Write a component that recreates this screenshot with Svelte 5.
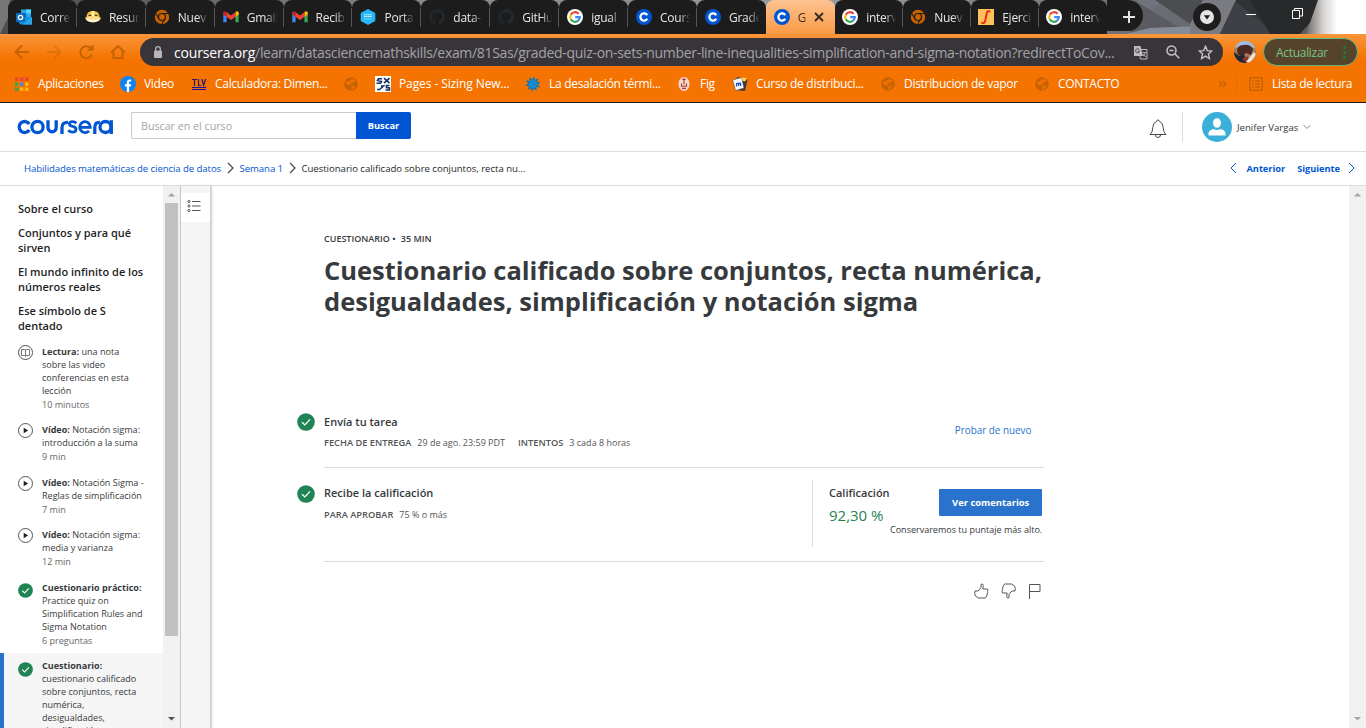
<script>
  const tabs = [
    { icon: 'outlook', label: 'Corre' },
    { icon: 'helmet', label: 'Resur' },
    { icon: 'chrome', label: 'Nuev' },
    { icon: 'gmail', label: 'Gmail' },
    { icon: 'gmail', label: 'Recib' },
    { icon: 'hex', label: 'Porta' },
    { icon: 'github', label: 'data-' },
    { icon: 'github', label: 'GitHu' },
    { icon: 'google', label: 'igual' },
    { icon: 'coursera', label: 'Cours' },
    { icon: 'coursera', label: 'Grade' },
    { icon: 'coursera', label: 'G', active: true },
    { icon: 'google', label: 'interv' },
    { icon: 'chrome', label: 'Nuev' },
    { icon: 'integral', label: 'Ejerci' },
    { icon: 'google', label: 'interv' }
  ];

  const bookmarks = [
    { icon: 'apps', label: 'Aplicaciones', width: 106 },
    { icon: 'facebook', label: 'Video', width: 71 },
    { icon: 'tlv', label: 'Calculadora: Dimen...', width: 152 },
    { icon: 'globe', label: '', width: 32 },
    { icon: 'sx', label: 'Pages - Sizing New...', width: 150, loose: true },
    { icon: 'sun', label: 'La desalación térmi...', width: 151 },
    { icon: 'fig', label: 'Fig', width: 56 },
    { icon: 'moodle', label: 'Curso de distribuci...', width: 148 },
    { icon: 'globe', label: 'Distribucion de vapor', width: 154 },
    { icon: 'globe', label: 'CONTACTO', width: 90 }
  ];

  const headings = [
    ['Sobre el curso'],
    ['Conjuntos y para qué', 'sirven'],
    ['El mundo infinito de los', 'números reales'],
    ['Ese símbolo de S', 'dentado']
  ];

  const lessons = [
    { icon: 'book', kind: 'Lectura:', lines: ['una nota', 'sobre las video', 'conferencias en esta', 'lección'], meta: '10 minutos' },
    { icon: 'play', kind: 'Vídeo:', lines: ['Notación sigma:', 'introducción a la suma'], meta: '9 min' },
    { icon: 'play', kind: 'Vídeo:', lines: ['Notación Sigma -', 'Reglas de simplificación'], meta: '7 min' },
    { icon: 'play', kind: 'Vídeo:', lines: ['Notación sigma:', 'media y varianza'], meta: '12 min' },
    { icon: 'check', kind: 'Cuestionario práctico:', lines: ['', 'Practice quiz on', 'Simplification Rules and', 'Sigma Notation'], meta: '6 preguntas' },
    { icon: 'check', kind: 'Cuestionario:', lines: ['', 'cuestionario calificado', 'sobre conjuntos, recta', 'numérica,', 'desigualdades,', 'simplificación y'], meta: '', active: true }
  ];
</script>

{#snippet check(size)}
  <svg width={size} height={size} viewBox="0 0 18 18">
    <circle cx="9" cy="9" r="8.8" fill="#1f8354" />
    <path d="M5 9.2l2.9 2.7 5.2-5.5" fill="none" stroke="#fff" stroke-width="1.3" />
  </svg>
{/snippet}

{#snippet icon(name)}
  <svg class="ico" width="16" height="16" viewBox="0 0 16 16">
    {#if name === 'outlook'}
      <rect x="5" y="0.5" width="10" height="10" fill="#28a8ea" />
      <rect x="10" y="0.5" width="5" height="4" fill="#50d9ff" />
      <rect x="5" y="4" width="5" height="6" fill="#0364b8" />
      <path d="M3 8h13v7.5H4.5L3 14z" fill="#1490df" />
      <path d="M16 8v7.5H7z" fill="#28a8ea" />
      <rect x="0" y="4" width="9" height="9" rx="0.8" fill="#0f6cbd" />
      <circle cx="4.5" cy="8.5" r="2.1" fill="none" stroke="#fff" stroke-width="1.4" />
    {:else if name === 'helmet'}
      <path d="M1.500 8C1.500 4 4 2 8 2s6.500 2 6.500 6z" fill="#f6c33c" />
      <path d="M6.300 2.300h3.400L9.200 7.500H6.800z" fill="#fff0a8" />
      <path d="M3.500 6.300h2.700M9.800 6.300h2.700" stroke="#4c3d1a" stroke-width="1.300" />
      <path d="M0 8.500q8-2 16 0-1 4.500-8 5Q1 13 0 8.500z" fill="#f8e08e" />
      <path d="M2.500 11q5.500 2 11 0" stroke="#fff" stroke-width="1.400" fill="none" />
    {:else if name === 'chrome'}
      <circle cx="8" cy="8" r="7.2" fill="#c66300" />
      <circle cx="8" cy="8" r="3.500" fill="#c66300" stroke="#241b14" stroke-width="1.200" />
      <path d="M8 4.500h7M5 9.800L1.700 4.200M11 9.800L7.700 15" stroke="#241b14" stroke-width="1.100" />
    {:else if name === 'gmail'}
      <path d="M0.300 3.500v9.800h3.300V7z" fill="#4285f4" />
      <path d="M15.700 3.500v9.800h-3.300V7z" fill="#34a853" />
      <path d="M0.300 3.200Q1.500 1.500 3.600 3v5L0.300 5.500z" fill="#c5221f" />
      <path d="M15.700 3.200Q14.500 1.500 12.400 3v5l3.300-2.500z" fill="#fbbc04" />
      <path d="M3.400 2.900L8 6.400l4.600-3.500v4.800L8 11.100 3.400 7.700z" fill="#ea4335" />
    {:else if name === 'hex'}
      <path d="M8 0l7.300 4v8L8 16 .7 12V4z" fill="#25b8f5" />
      <path d="M4 5.700h8M4 7.500h8" stroke="#dff6ff" stroke-width="1.100" stroke-dasharray="1.500 .5" />
      <path d="M4 10h8" stroke="#8adcfb" stroke-width="1.200" stroke-dasharray="2 .6" />
    {:else if name === 'github'}
      <path fill="#24292e" d="M8 .3a7.800 7.800 0 0 0-2.500 15.200c.4.100.5-.2.500-.4v-1.500c-2.200.5-2.700-.9-2.700-.9-.4-.9-.9-1.200-.9-1.200-.7-.5.100-.5.100-.5.800.1 1.200.8 1.200.8.700 1.200 1.900.9 2.300.7.100-.5.300-.9.500-1.100-1.800-.2-3.600-.9-3.600-3.900 0-.9.300-1.600.8-2.100-.1-.2-.4-1 .1-2.100 0 0 .7-.2 2.200.8a7.500 7.500 0 0 1 4 0c1.500-1 2.200-.8 2.200-.8.4 1.100.2 1.900.1 2.100.5.600.8 1.300.8 2.100 0 3-1.800 3.700-3.600 3.900.3.200.6.700.6 1.500v2.200c0 .2.100.5.500.4A7.800 7.800 0 0 0 8 .3z" />
    {:else if name === 'google'}
      <circle cx="8" cy="8" r="8" fill="#fff" />
      <g fill="none" stroke-width="2.200">
        <path d="M11.600 4.800A4.800 4.800 0 0 0 3.800 5.700" stroke="#ea4335" />
        <path d="M3.800 5.700a4.800 4.800 0 0 0 0 4.600" stroke="#fbbc05" />
        <path d="M3.800 10.300a4.800 4.800 0 0 0 7.400 1.300" stroke="#34a853" />
        <path d="M11.200 11.600A4.800 4.800 0 0 0 12.800 8.100H8.200" stroke="#4285f4" />
      </g>
    {:else if name === 'coursera'}
      <circle cx="8" cy="8" r="8" fill="#0056d2" />
      <path d="M11.200 6.300a3.600 3.600 0 1 0 0 3.400" fill="none" stroke="#fff" stroke-width="2.300" />
    {:else if name === 'integral'}
      <rect width="16" height="16" fill="#ffc15a" />
      <path d="M12.200 3Q9.500 .6 8.700 4.500L7.300 11.500Q6.500 15.300 3.500 13.300" fill="none" stroke="#f02a16" stroke-width="2" />
    {:else if name === 'apps'}
      {#each [['#ea4335', '#ea4335', '#ea4335'], ['#34a853', '#4285f4', '#fbbc05'], ['#34a853', '#fbbc05', '#fbbc05']] as row, r}
        {#each row as fill, c}
          <rect x={1 + c * 5} y={1.500 + r * 5} width="3.400" height="3.400" {fill} />
        {/each}
      {/each}
    {:else if name === 'facebook'}
      <circle cx="8" cy="8" r="8" fill="#0b84f4" />
      <path d="M6.800 16v-5.500H4.900V8.200h1.900V6.500c0-2 1.200-3 2.900-3 .8 0 1.500.1 1.500.1v2h-.9c-.9 0-1.200.5-1.200 1.100v1.500h2.100l-.4 2.300H9.100V16z" fill="#fff" />
    {:else if name === 'tlv'}
      <path d="M1 3.500h5M3.500 3.500V10M7.500 3v6.500H10M10.800 3l1.800 6.200L14.600 3" stroke="#26186b" stroke-width="1.200" fill="none" />
      <path d="M1 11.500h14M1 13.500h14" stroke="#1a0dab" stroke-width="1" />
    {:else if name === 'globe'}
      <circle cx="8" cy="8" r="6.800" fill="#c66300" />
      <path d="M3.200 5.200Q6 6 7 4.200l3-1.400 2.700 1.600-2 2.200-2.600.5.300 1.800-3.300.3-2.400-1.700zM8.700 10l3.800-.6-1.900 3.700-2.300.8z" fill="#f57300" opacity=".85" />
    {:else if name === 'sx'}
      <rect width="16" height="16" fill="#fff" />
      <g fill="none" stroke="#15316b" stroke-width="1.600">
        <path d="M7 2.800H3.500L2.500 4.500l4 1L5.500 7.300H1.500M9 2.200l5.500 5M14.500 2.200l-5.500 5" />
        <path d="M2 13.500h2.500l4-3.500H6M14.500 9.500h-3v2l3 .5v2h-4" />
      </g>
    {:else if name === 'sun'}
      {#each Array(10) as _, i}
        <path d="M6.200 4.500L9.200.2 10 5z" fill="#0874b8" transform={`rotate(${i * 36} 8 8)`} />
      {/each}
      <circle cx="8" cy="8" r="4.400" fill="#1489ce" />
    {:else if name === 'fig'}
      <ellipse cx="8" cy="8" rx="5.600" ry="6.900" fill="#f2d7cd" />
      <path d="M8 2v6.500M6.300 3.500h3.400M5.500 7.500v2.700h5V7.500M6 12.400h4" fill="none" stroke="#b23838" stroke-width="1.100" />
    {:else if name === 'moodle'}
      <path d="M5 1l10.500 2.500L13 15l-9-1z" fill="#3a3a3a" />
      <path d="M.7 4L9.500 1.500 12 12l-8.500 2.500z" fill="#f5f7fb" stroke="#444" stroke-width=".5" />
      <path d="M9.500 1.500l5.500.8-1.800 3.200-2.900-.7z" fill="#ffd447" />
      <path d="M4.500 10.500l.2-3.500M4.700 8q1.800-1.700 2 0l-.2 2M6.700 8q1.800-1.700 2 0l-.2 2" fill="none" stroke="#1c55c4" stroke-width="1.300" />
    {/if}
  </svg>
{/snippet}

<div class="window">
  <div class="tabstrip">
    <svg class="theme" width="1366" height="34" viewBox="0 0 1366 34" preserveAspectRatio="none">
      <defs>
        <linearGradient id="strip" x1="0" x2="1">
          <stop offset="0" stop-color="#4c4c4e" />
          <stop offset=".3" stop-color="#85858a" />
          <stop offset=".6" stop-color="#9a9a9e" />
          <stop offset=".84" stop-color="#6c6e74" />
          <stop offset="1" stop-color="#55575c" />
        </linearGradient>
        <linearGradient id="glow" x1="0" x2="1">
          <stop offset="0" stop-color="#6d6a68" />
          <stop offset=".3" stop-color="#d8d6d4" />
          <stop offset=".52" stop-color="#fff" />
        </linearGradient>
      </defs>
      <rect width="1366" height="34" fill="url(#strip)" />
      <path d="M1134 0h30l-20 16-15 2z" fill="#70737b" />
      <path d="M1134 0l46 28-50 6z" fill="#595b61" />
      <path d="M1125 34l25-6 48-2-8 8z" fill="#858b99" />
      <path d="M1155 0h48l-13 24z" fill="#4b4d51" />
      <path d="M1203 0h35l-15 34h-33v-10z" fill="#797b80" />
      <path d="M1236 0h35l4 34h-55z" fill="#303236" />
      <path d="M1236 2l40 32h-56z" fill="#3e4045" />
      <path d="M1250 0h80l-30 34h-30z" fill="#28292b" />
      <path d="M1318 0h48v34h-60z" fill="url(#glow)" />
      <path d="M0 34L10 14V0H0z" fill="#77777a" />
    </svg>
    <div class="tabs">
      {#each tabs as tab, i}
        <div class="tab" class:late={i > 11} class:active={tab.active} class:nosep={i === 10 || i === 15}>
          {@render icon(tab.icon)}
          <span class="tablabel">{tab.label}</span>
          {#if tab.active}
            <svg class="close" width="10" height="10" viewBox="0 0 10 10"><path d="M1 1l8 8M9 1L1 9" stroke="#332a22" stroke-width="1.800" /></svg>
          {/if}
        </div>
      {/each}
      <div class="newtab">
        <svg width="14" height="14" viewBox="0 0 14 14"><path d="M7 1v12M1 7h12" stroke="#e4e4e4" stroke-width="2" /></svg>
      </div>
    </div>
    <div class="controls">
      <svg width="28" height="28" viewBox="0 0 28 28"><circle cx="14" cy="14" r="14" fill="#1d1d1d" /><circle cx="14" cy="14" r="7" fill="#e4e4e4" /><path d="M10.800 12.200h6.400L14 16.500z" fill="#1d1d1d" /></svg>
      <svg class="min" width="10" height="10" viewBox="0 0 10 10"><path d="M0 5.500h10" stroke="#fff" /></svg>
      <svg class="restore" width="11" height="11" viewBox="0 0 11 11"><path d="M.5 2.500h7v8h-7zM2.500 2.500v-2h8v7.500h-3" fill="none" stroke="#fff" /></svg>
    </div>
  </div>

  <div class="toolbar">
    <svg class="nav" width="126" height="20" viewBox="0 0 126 20" fill="none" stroke="#c66300" stroke-width="2">
      <path d="M15 10H2M8 3.500L1.500 10 8 16.500" />
      <path d="M33 10h13M40 3.500l6.500 6.500-6.500 6.500" opacity=".45" />
      <path d="M77.500 7A6 6 0 1 0 78 12.300M78.500 3v4.800h-5" />
      <path d="M97 10.500l7-6.500 7 6.500M99.500 9.500V16h9V9.500" />
    </svg>
    <div class="omnibox">
      <svg width="10" height="13" viewBox="0 0 10 13"><rect x="1" y="4.500" width="8" height="7.500" rx="1" fill="#b8b6ba" /><path d="M2.700 5V3a2.300 2.300 0 0 1 4.600 0v2" fill="none" stroke="#b8b6ba" stroke-width="1.300" /></svg>
      <div class="url"><b>coursera.org</b>/learn/datasciencemathskills/exam/81Sas/graded-quiz-on-sets-number-line-inequalities-simplification-and-sigma-notation?redirectToCov...</div>
      <svg class="translate" width="15" height="15" viewBox="0 0 15 15">
        <path d="M5.500 4.500h8.500v9.500H7.500z" fill="none" stroke="#bdbbbf" />
        <path d="M1 1h6.500l2.500 10H1z" fill="#bdbbbf" />
        <path d="M6.300 4.700a2 2 0 1 0 .2 1.600H4.700" fill="none" stroke="#454248" stroke-width=".9" />
        <path d="M9.500 7.500h4M12.500 7.500q-.6 2-2.300 3.500M10.300 9l2.500 3" fill="none" stroke="#bdbbbf" stroke-width=".9" />
      </svg>
      <svg class="zoomout" width="14" height="14" viewBox="0 0 14 14" fill="none" stroke="#c4c2c6" stroke-width="1.500"><circle cx="5.500" cy="5.500" r="4.500" /><path d="M9 9l4.300 4.300M3.500 5.500h4" /></svg>
      <svg class="star" width="15" height="15" viewBox="0 0 15 15"><path d="M7.500 1.300l1.800 4.300 4.500.4-3.400 3 1 4.500-3.900-2.400-3.900 2.400 1-4.500-3.400-3 4.500-.4z" fill="none" stroke="#c4c2c6" stroke-width="1.400" /></svg>
    </div>
    <svg class="photo" width="22" height="22" viewBox="0 0 22 22">
      <defs><clipPath id="face"><circle cx="11" cy="11" r="11" /></clipPath></defs>
      <g clip-path="url(#face)">
        <rect width="22" height="22" fill="#9dbbe0" />
        <path d="M0 7l5-1 5 2 5-2 7 1v15H0z" fill="#a8795f" />
        <path d="M3 9q1-5 7-5 6-1 9 4l-2 6-5-2-4 3-4-1z" fill="#4a2a22" />
        <path d="M0 11l5 4 5-2 3 9H0z" fill="#222534" />
        <path d="M8 18l5-3 3 4-3 3z" fill="#8b3a30" />
        <path d="M12 21l8-10 2 3-6 8z" fill="#efe5e0" />
      </g>
    </svg>
    <div class="update"><span>Actualizar</span><i></i></div>
  </div>

  <div class="bookmarks">
    {#each bookmarks as b}
      <div class="bookmark" class:loose={b.loose} style:width="{b.width}px">{@render icon(b.icon)}<span>{b.label}</span></div>
    {/each}
    <svg class="more" width="9" height="8" viewBox="0 0 9 8"><path d="M1 1l3 3-3 3M5 1l3 3-3 3" fill="none" stroke="#c66300" stroke-width="1.400" /></svg>
    <div class="reading">
      <svg width="14" height="14" viewBox="0 0 14 14" fill="none" stroke="#c66300" stroke-width="1.400"><path d="M.7 .7h12.600v12.600H.7zM3 4h1.500M6 4h5M3 7h1.500M6 7h5M3 10h1.500M6 10h5" /></svg>
      <span>Lista de lectura</span>
    </div>
  </div>

  <header class="top">
    <div class="logo">
      <svg width="97" height="18" viewBox="0 0 97 18" fill="none" stroke="#0056d2" stroke-width="3.300">
        <path d="M12.300 6A5.500 5.500 0 1 0 12.300 12" />
        <circle cx="20.500" cy="9" r="5.600" />
        <path d="M31 2.200v7.600a4 4 0 0 0 8.200 0V2.200" />
        <path d="M45 16V9.500q0-5.500 6-5.200" />
        <path d="M59.300 5.300Q57.500 3.500 55 3.700q-2.600.3-2.600 2.400 0 1.800 3.300 2.300 3.600.7 3.300 3.200-.3 2.600-3.200 2.600-2.700 0-4.500-2" stroke-width="2.800" />
        <path d="M62.500 9.400H73.300A5.300 5.500 0 1 0 72 12.800" stroke-width="2.800" />
        <path d="M77.800 16V9.500q0-5.500 5-5.200" />
        <circle cx="88.500" cy="9" r="5.500" />
        <path d="M94.300 2.200V16" />
      </svg>
    </div>
    <div class="search"><div class="field">Buscar en el curso</div><div class="go">Buscar</div></div>
    <svg class="bell" width="18" height="20" viewBox="0 0 18 20" fill="none" stroke="#4a4a4a">
      <path d="M1 15.500Q3.800 13.500 3.800 8.500 4 3.500 7.500 2.500q.2-1.500 1.500-1.500t1.500 1.500q3.500 1 3.700 6 0 5 2.800 7zM6.500 16a2.500 2.500 0 0 0 5 0" />
    </svg>
    <div class="user">
      <svg width="30" height="30" viewBox="0 0 30 30"><circle cx="15" cy="15" r="15" fill="#3aafda" /><ellipse cx="15" cy="11" rx="4" ry="4.800" fill="#fff" /><path d="M6.500 23.500v-2.200q0-3 5-4.300 3.500 2 7 0 5 1.300 5 4.300v2.200z" fill="#fff" /></svg>
      <span>Jenifer Vargas</span>
      <svg width="8" height="6" viewBox="0 0 8 6"><path d="M.5 1L4 4.500 7.500 1" fill="none" stroke="#888" /></svg>
    </div>
  </header>

  <nav class="crumbs">
    <span class="link">Habilidades matemáticas de ciencia de datos</span>
    <svg width="7" height="12" viewBox="0 0 7 12"><path d="M1 1l5 5-5 5" fill="none" stroke="#444" stroke-width="1.200" /></svg>
    <span class="link">Semana 1</span>
    <svg width="7" height="12" viewBox="0 0 7 12"><path d="M1 1l5 5-5 5" fill="none" stroke="#444" stroke-width="1.200" /></svg>
    <span class="here">Cuestionario calificado sobre conjuntos, recta nu…</span>
    <div class="pager">
      <svg width="7" height="12" viewBox="0 0 7 12"><path d="M6 1L1 6l5 5" fill="none" stroke="#0056d2" /></svg>
      <b>Anterior</b><b class="next">Siguiente</b>
      <svg width="7" height="12" viewBox="0 0 7 12"><path d="M1 1l5 5-5 5" fill="none" stroke="#0056d2" /></svg>
    </div>
  </nav>

  <div class="body">
    <aside>
      <div class="heads">
        {#each headings as h}
          <h4>{#each h as line}<div>{line}</div>{/each}</h4>
        {/each}
      </div>
      {#each lessons as l}
        <div class="lesson" class:active={l.active}>
          <div class="licon" class:done={l.icon === 'check'}>
            {#if l.icon === 'check'}
              {@render check(15)}
            {:else}
              <svg width="15" height="15" viewBox="0 0 15 15" fill="none" stroke="#555">
                <circle cx="7.500" cy="7.500" r="7" />
                {#if l.icon === 'play'}
                  <path d="M5.700 4.700v5.600l4.400-2.800z" fill="#222" stroke="none" />
                {:else}
                  <path d="M7.500 5v6M3.500 4.500h3q1 0 1 1 0-1 1-1h3v6h-3q-1 0-1 1 0-1-1-1h-3z" stroke-width=".8" />
                {/if}
              </svg>
            {/if}
          </div>
          <div class="ltext">
            {#each l.lines as line, i}
              <div>{#if i === 0}<b>{l.kind}</b>{' '}{/if}{line}</div>
            {/each}
            <div class="meta">{l.meta}</div>
          </div>
        </div>
      {/each}
    </aside>
    <div class="scroll side">
      <svg width="17" height="17" viewBox="0 0 17 17"><path d="M5 10.500h7L8.500 7z" fill="#a3a3a3" /></svg>
      <div class="thumb"></div>
      <svg width="17" height="17" viewBox="0 0 17 17"><path d="M5 7h7l-3.500 3.500z" fill="#505050" /></svg>
    </div>
    <div class="rail">
      <div class="railbtn">
        <svg width="14" height="14" viewBox="0 0 14 14" fill="none" stroke="#555"><path d="M5 2.500h8.500M5 7h8.500M5 11.500h8.500" /><circle cx="2" cy="2.500" r="1.100" /><circle cx="2" cy="7" r="1.100" /><circle cx="2" cy="11.500" r="1.100" /></svg>
      </div>
    </div>
    <main>
      <div class="kicker"><span>CUESTIONARIO</span><span class="dot">•</span><span>35 MIN</span></div>
      <h1>Cuestionario calificado sobre conjuntos, recta numérica,<br />desigualdades, simplificación y notación sigma</h1>
      <section class="row submit">
        <div class="mark">{@render check(18)}</div>
        <div class="info">
          <h3>Envía tu tarea</h3>
          <p><b>FECHA DE ENTREGA</b><span>29 de ago. 23:59 PDT</span><b class="at">INTENTOS</b><span>3 cada 8 horas</span></p>
        </div>
        <span class="retry">Probar de nuevo</span>
      </section>
      <section class="row grade">
        <div class="mark">{@render check(18)}</div>
        <div class="info">
          <h3>Recibe la calificación</h3>
          <p><b>PARA APROBAR</b><span>75 % o más</span></p>
        </div>
        <div class="score">
          <div class="result">
            <h3>Calificación</h3>
            <div class="pct">92,30 %</div>
          </div>
          <div class="action">
            <div class="button">Ver comentarios</div>
            <div class="keep">Conservaremos tu puntaje más alto.</div>
          </div>
        </div>
      </section>
      <div class="feedback">
        <svg width="15" height="16" viewBox="0 0 15 16" fill="none" stroke="#555"><path d="M1 8h3.200L7 4.500V1.300Q8.800.2 9.300 2.500L8.800 6h4.700q1 1 0 2.500.6 1.200-.3 2.400.3 1.300-.7 2.100 0 1.500-1.300 2H4.500L1.500 13Q.2 10.500 1 8z" /></svg>
        <svg width="15" height="16" viewBox="0 0 15 16" fill="none" stroke="#555"><path d="M14 8h-3.200L8 11.500v3.200q-1.800 1.100-2.300-1.200L6.200 10H1.500q-1-1 0-2.500Q.9 6.300 1.800 5.100 1.500 3.800 2.500 3q0-1.500 1.300-2h6.700l3 2q1.300 2.500.5 5z" /></svg>
        <svg width="13" height="16" viewBox="0 0 13 16" fill="none" stroke="#555"><path d="M1.500 16V1.500H12V8.500H1.500" /></svg>
      </div>
    </main>
    <div class="scroll page">
      <svg width="17" height="17" viewBox="0 0 17 17"><path d="M5 10.500h7L8.500 7z" fill="#a3a3a3" /></svg>
      <svg width="17" height="17" viewBox="0 0 17 17"><path d="M5 7h7l-3.500 3.500z" fill="#a3a3a3" /></svg>
    </div>
  </div>
</div>

<style>
  :global(body) { margin: 0; overflow: hidden; background: #fff; }
  .window, .window * { box-sizing: border-box; }
  .window { width: 1366px; height: 728px; display: flex; flex-direction: column; overflow: hidden; font-family: 'Open Sans', sans-serif; color: #373a3c; background: #fff; }
  svg { display: block; flex: none; }
  h1, h3, h4, p { margin: 0; }

  .tabstrip { height: 34px; position: relative; display: flex; flex: none; }
  .theme { position: absolute; inset: 0; }
  .tabs { position: relative; display: flex; width: 1143px; padding-left: 8px; }
  .tab { width: 68.900px; flex: none; display: flex; align-items: center; padding-left: 8px; background: #1c1c1c; border-radius: 8px 8px 0 0; position: relative; font-size: 12px; letter-spacing: -0.250px; color: #e6e6e6; }
  .late { width: 68px; padding-left: 7.500px; }
  .tab:not(.nosep):not(.active)::after { content: ''; position: absolute; right: 0; top: 8px; height: 19px; width: 1px; background: #555; }
  .tablabel { margin-left: 8px; width: 32px; white-space: nowrap; -webkit-mask-image: linear-gradient(90deg, #000 60%, transparent 95%); mask-image: linear-gradient(90deg, #000 60%, transparent 95%); }
  .active.tab { background: linear-gradient(#fdc393, #fa9a44); color: #3b2a1c; z-index: 1; }
  .active.tab .tablabel { width: 10px; }
  .close { margin-left: 6px; }
  .newtab { flex: 1; background: #1c1c1c; border-radius: 0 17px 17px 0; height: 31px; display: flex; align-items: center; justify-content: flex-end; padding-right: 7px; padding-top: 3px; }
  .controls { position: relative; display: flex; align-items: center; padding-left: 50px; }
  .min { margin-left: 25px; margin-top: -7px; }
  .restore { margin-left: 36px; margin-top: -7px; }

  .toolbar { height: 34px; flex: none; display: flex; align-items: center; background: linear-gradient(#f9963c, #f57300 75%); padding-top: 2px; }
  .nav { margin-left: 14px; width: 126px; }
  .omnibox { width: 1083px; height: 28px; border-radius: 14px; background: #38353a; display: flex; align-items: center; padding-left: 13px; }
  .url { margin-left: 11px; width: 952px; font-size: 14px; letter-spacing: -0.320px; color: #a4a2a7; white-space: nowrap; }
  .url b { font-weight: 400; color: #fff; letter-spacing: -0.150px; }
  .translate { margin-left: 7px; }
  .zoomout { margin-left: 18px; }
  .star { margin-left: 18px; }
  .photo { margin-left: 11px; }
  .update { margin-left: 7px; width: 95px; height: 28px; border: 1.500px solid #69b77c; border-radius: 14px; background: #56432b; color: #79c48a; font-size: 12px; letter-spacing: -0.300px; display: flex; align-items: center; padding-left: 12px; }
  .update i { width: 3px; height: 3px; border-radius: 50%; background: #188038; margin-left: 15px; box-shadow: 0 -5px #188038, 0 5px #188038; }

  .bookmarks { height: 35px; flex: none; background: #f57300; border-bottom: 1px solid #1c1c1c; display: flex; align-items: center; padding-left: 14px; padding-bottom: 3px; font-size: 12px; letter-spacing: -0.300px; color: #fff; }
  .bookmark { flex: none; display: flex; align-items: center; white-space: nowrap; }
  .bookmark span { margin-left: 8px; }
  .loose { letter-spacing: -0.100px; }
  .more { margin-left: 94px; }
  .reading { margin-left: 9px; height: 16px; border-left: 1px solid #e56c00; padding-left: 12px; display: flex; align-items: center; gap: 9px; white-space: nowrap; }

  .top { height: 49px; flex: none; border-bottom: 1px solid #dcdcdc; display: flex; align-items: center; }
  .logo { margin-left: 17px; width: 97px; }
  .search { margin-left: 17px; margin-top: -4px; display: flex; width: 280px; height: 27px; font-size: 10.700px; }
  .field { width: 225px; border: 1px solid #c7cad1; border-right: 0; border-radius: 2px 0 0 2px; padding-left: 9px; line-height: 26px; color: #a5a5a5; }
  .go { flex: 1; background: #0056d2; border-radius: 0 2px 2px 0; color: #fff; font-weight: 700; font-size: 9.300px; text-align: center; line-height: 27px; }
  .bell { margin-left: 738px; margin-top: 3px; }
  .user { margin-left: 15px; height: 30px; border-left: 1px solid #dcdcdc; padding-left: 19px; display: flex; align-items: center; font-size: 9.600px; white-space: nowrap; }
  .user span { margin-left: 5px; margin-right: 5px; }

  .crumbs { height: 34px; flex: none; border-bottom: 1px solid #dcdcdc; display: flex; align-items: center; padding: 0 0 1px 24px; font-size: 9.600px; white-space: nowrap; color: #1f1f1f; }
  .link { color: #0056d2; letter-spacing: -0.085px; }
  .here { letter-spacing: -0.030px; }
  .crumbs > svg { margin: 0 5.500px 0 6px; }
  .pager { margin-left: auto; display: flex; align-items: center; color: #0056d2; padding-right: 11px; font-size: 9.300px; letter-spacing: -0.050px; }
  .pager b { margin-left: 9px; }
  .pager .next { margin-left: 12px; margin-right: 8px; }

  .body { flex: 1; min-height: 0; display: flex; }
  aside { width: 163px; overflow: hidden; flex: none; }
  .heads { padding: 14.500px 0 5.500px 18px; display: flex; flex-direction: column; gap: 9px; }
  h4 { font-size: 11px; line-height: 15px; font-weight: 600; color: #1f1f1f; white-space: nowrap; }
  .lesson { display: flex; padding: 6.500px 0 6px 18px; font-size: 9.050px; line-height: 13px; white-space: nowrap; }
  .lesson.active { background: #f5f5f5; border-left: 4px solid #2a73cc; padding-left: 14px; }
  .licon { width: 24px; flex: none; }
  .done { padding-top: 2px; }
  .active .done { padding-top: 3px; }
  .meta { margin-top: 1px; color: #666; }
  .scroll { width: 17px; background: #f1f1f1; display: flex; flex-direction: column; justify-content: space-between; flex: none; padding-bottom: 1px; }
  .thumb { width: 13px; height: 433px; background: #c1c1c1; margin: 0 0 auto 2px; }
  .rail { width: 31px; flex: none; border-left: 1px solid #c9c9c9; border-right: 1px solid #d0d0d0; background: #f5f5f5; padding-top: 7px; box-shadow: 1px 0 2px #ccc; }
  .railbtn { height: 29px; background: #fff; display: flex; align-items: center; padding: 0 0 3px 6px; }

  main { width: 833px; padding: 46px 0 0 113px; flex: none; }
  .page { margin-left: auto; }
  .kicker { font-size: 9px; line-height: 13px; font-weight: 600; display: flex; white-space: nowrap; }
  .dot { margin: 0 5px 0 2.500px; }
  h1 { margin-top: 10px; font-size: 25.500px; line-height: 31px; font-weight: 700; white-space: nowrap; }
  .row { display: flex; border-bottom: 1px solid #dcdcdc; }
  .mark { margin-left: -27px; width: 27px; flex: none; }
  .submit { margin-top: 96px; height: 55px; }
  h3 { font-size: 11px; line-height: 16px; font-weight: 600; white-space: nowrap; }
  .submit h3 { padding-top: 1px; line-height: 16px; }
  .info p { margin-top: 6px; font-size: 9px; line-height: 14px; white-space: nowrap; color: #555; display: flex; }
  .info b { font-weight: 600; font-size: 9.250px; margin-right: 6px; }
  .info .at { margin-left: 13px; }
  .retry { margin-left: auto; margin-right: 12.500px; margin-top: 9.500px; font-size: 9.900px; line-height: 14px; font-weight: 500; color: #2a73cc; white-space: nowrap; }
  .grade { height: 94px; }
  .grade .mark { padding-top: 17px; }
  .grade .info { padding-top: 17px; }
  .grade .info p { margin-top: 7px; }
  .score { margin-left: auto; margin-top: 12px; width: 232px; height: 67px; border-left: 1px solid #dcdcdc; padding: 5px 2px 0 16px; display: flex; justify-content: space-between; }
  .result { width: 61px; flex: none; }
  .pct { font-size: 15px; line-height: 20px; color: #1f8354; margin-top: 4px; white-space: nowrap; }
  .action { display: flex; flex-direction: column; align-items: flex-end; margin-top: 4px; }
  .button { width: 103px; height: 27px; background: #2a73cc; border-radius: 1px; color: #fff; font-weight: 700; font-size: 9.400px; line-height: 27px; text-align: center; }
  .keep { font-size: 9.030px; line-height: 14px; margin-top: 7px; white-space: nowrap; }
  .feedback { display: flex; justify-content: flex-end; gap: 12px; padding: 21px 3px 0 0; }
</style>
